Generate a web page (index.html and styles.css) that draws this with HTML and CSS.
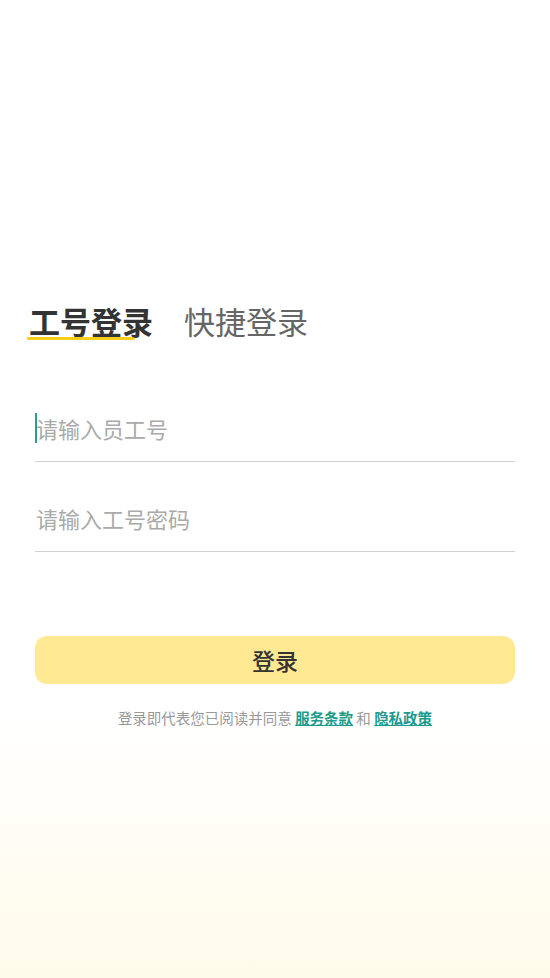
FILE: index.html
```html
<!DOCTYPE html>
<html lang="zh-CN">
<head>
    <meta charset="UTF-8">
    <meta name="viewport" content="width=device-width, initial-scale=1.0">
    <title>登录</title>
    <link rel="stylesheet" href="styles.css">
</head>
<body>
    <div class="page">
        <!-- Tabs -->
        <div class="tabs">
            <span class="tab active">工号登录</span>
            <span class="tab">快捷登录</span>
        </div>

        <!-- Login Form -->
        <form class="login-form">
            <div class="field">
                <span class="caret"></span>
                <input type="text" placeholder="请输入员工号">
            </div>
            <div class="field">
                <input type="password" placeholder="请输入工号密码">
            </div>
            <button type="submit" class="login-btn">登录</button>
            <p class="agreement">登录即代表您已阅读并同意 <a href="#">服务条款</a> 和 <a href="#">隐私政策</a></p>
        </form>
    </div>
</body>
</html>
```

FILE: styles.css
```css
* { margin: 0; padding: 0; box-sizing: border-box; }
body { font-family: "Noto Sans CJK SC", "Noto Sans", sans-serif; background: #fff; }
.page { min-height: 978px; padding-top: 300px; background: linear-gradient(#fff 0, #fff 73%, #fffbea 100%); }

/* Tabs */
.tabs { display: flex; gap: 31px; padding-left: 29px; }
.tab { position: relative; font-size: 31px; line-height: 42px; color: #666; }
.tab.active { color: #333; font-weight: bold; }
.tab.active::after { content: ""; position: absolute; left: -2px; bottom: 2px; width: 108px; height: 3px; background: #f7cd1e; border-radius: 0 3px 2px 2px / 0 3px 1px 1px; }

/* Form */
.login-form { padding: 0 35px; margin-top: 57px; }
.field { position: relative; border-bottom: 1px solid #d2d2d2; }
.field + .field { margin-top: 27px; }
.field input { display: block; width: 100%; height: 62px; padding: 0 0 4px 1px; border: none; outline: none; background: transparent; font-family: inherit; font-size: 22px; color: #333; }
.field input::placeholder { color: #aaa; }
.caret { position: absolute; left: 0; top: 14px; width: 2px; height: 30px; background: #2a9d8f; }

/* Button */
.login-btn { display: block; width: 100%; height: 48px; margin-top: 84px; border: none; border-radius: 12px; background: #ffe993; font-family: inherit; font-size: 23px; font-weight: 500; color: #333; cursor: pointer; }

/* Agreement */
.agreement { margin-top: 24px; text-align: center; font-size: 14.5px; line-height: 20px; color: #999; }
.agreement a { color: #1a9b8c; font-weight: bold; text-decoration: underline; }
```
